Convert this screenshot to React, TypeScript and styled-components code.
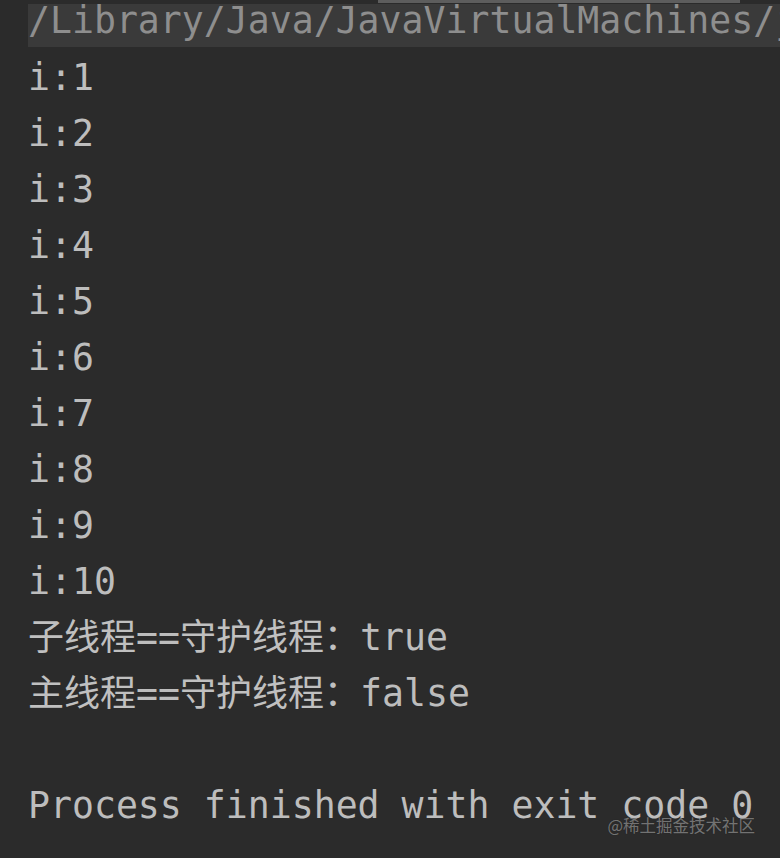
import React from "react";
import styled, { createGlobalStyle } from "styled-components";

const Global = createGlobalStyle`
  html, body {
    margin: 0;
    padding: 0;
    background: #2b2b2b;
  }
  #root {
    width: 780px;
    height: 858px;
  }
`;

const Console = styled.div`
  position: relative;
  width: 780px;
  height: 858px;
  overflow: hidden;
  background: #2b2b2b;
  display: flex;
  flex-direction: column;
  font-family: "DejaVu Sans Mono", "Noto Sans CJK SC", monospace;
  font-size: 36.5px;
  color: #bdbdbd;
`;

const TopStrip = styled.div`
  height: 4px;
  display: flex;
  flex-shrink: 0;
`;

const ScrollThumb = styled.div`
  margin-left: 378px;
  width: 362px;
  height: 3px;
  background: #5d5d5d;
`;

const CommandLine = styled.div`
  margin-left: 28px;
  height: 43px;
  flex-shrink: 0;
  background: #3a3a3a;
  color: #8e8e8e;
  line-height: 34px;
  white-space: nowrap;
  overflow: hidden;
`;

const Output = styled.div`
  margin-top: 2.5px;
  padding-left: 28px;
  display: flex;
  flex-direction: column;
`;

const Line = styled.div`
  height: 56px;
  line-height: 56px;
  white-space: pre;
`;

const Han = styled.span`
  font-family: "Noto Sans CJK SC", sans-serif;
  font-size: 36px;
  line-height: 40px;
  color: #c0c0c0;
`;

const Watermark = styled.div`
  position: absolute;
  right: 25px;
  bottom: 24px;
  font-family: "Noto Sans CJK SC", sans-serif;
  font-size: 16.5px;
  line-height: 18px;
  color: rgba(255, 255, 255, 0.38);
  text-shadow: 0 0 1px rgba(0, 0, 0, 0.3);
  white-space: nowrap;
`;

const counts = [1, 2, 3, 4, 5, 6, 7, 8, 9, 10];

export default function App() {
  return (
    <>
      <Global />
      <Console>
        <TopStrip>
          <ScrollThumb />
        </TopStrip>
        <CommandLine>
          /Library/Java/JavaVirtualMachines/jdk1.8.0_281.jdk/Contents/Home/bin/java
        </CommandLine>
        <Output>
          {counts.map((n) => (
            <Line key={n}>i:{n}</Line>
          ))}
          <Line>
            <Han>子线程</Han>==<Han>守护线程：</Han>true
          </Line>
          <Line>
            <Han>主线程</Han>==<Han>守护线程：</Han>false
          </Line>
          <Line> </Line>
          <Line>Process finished with exit code 0</Line>
        </Output>
        <Watermark>@稀土掘金技术社区</Watermark>
      </Console>
    </>
  );
}
